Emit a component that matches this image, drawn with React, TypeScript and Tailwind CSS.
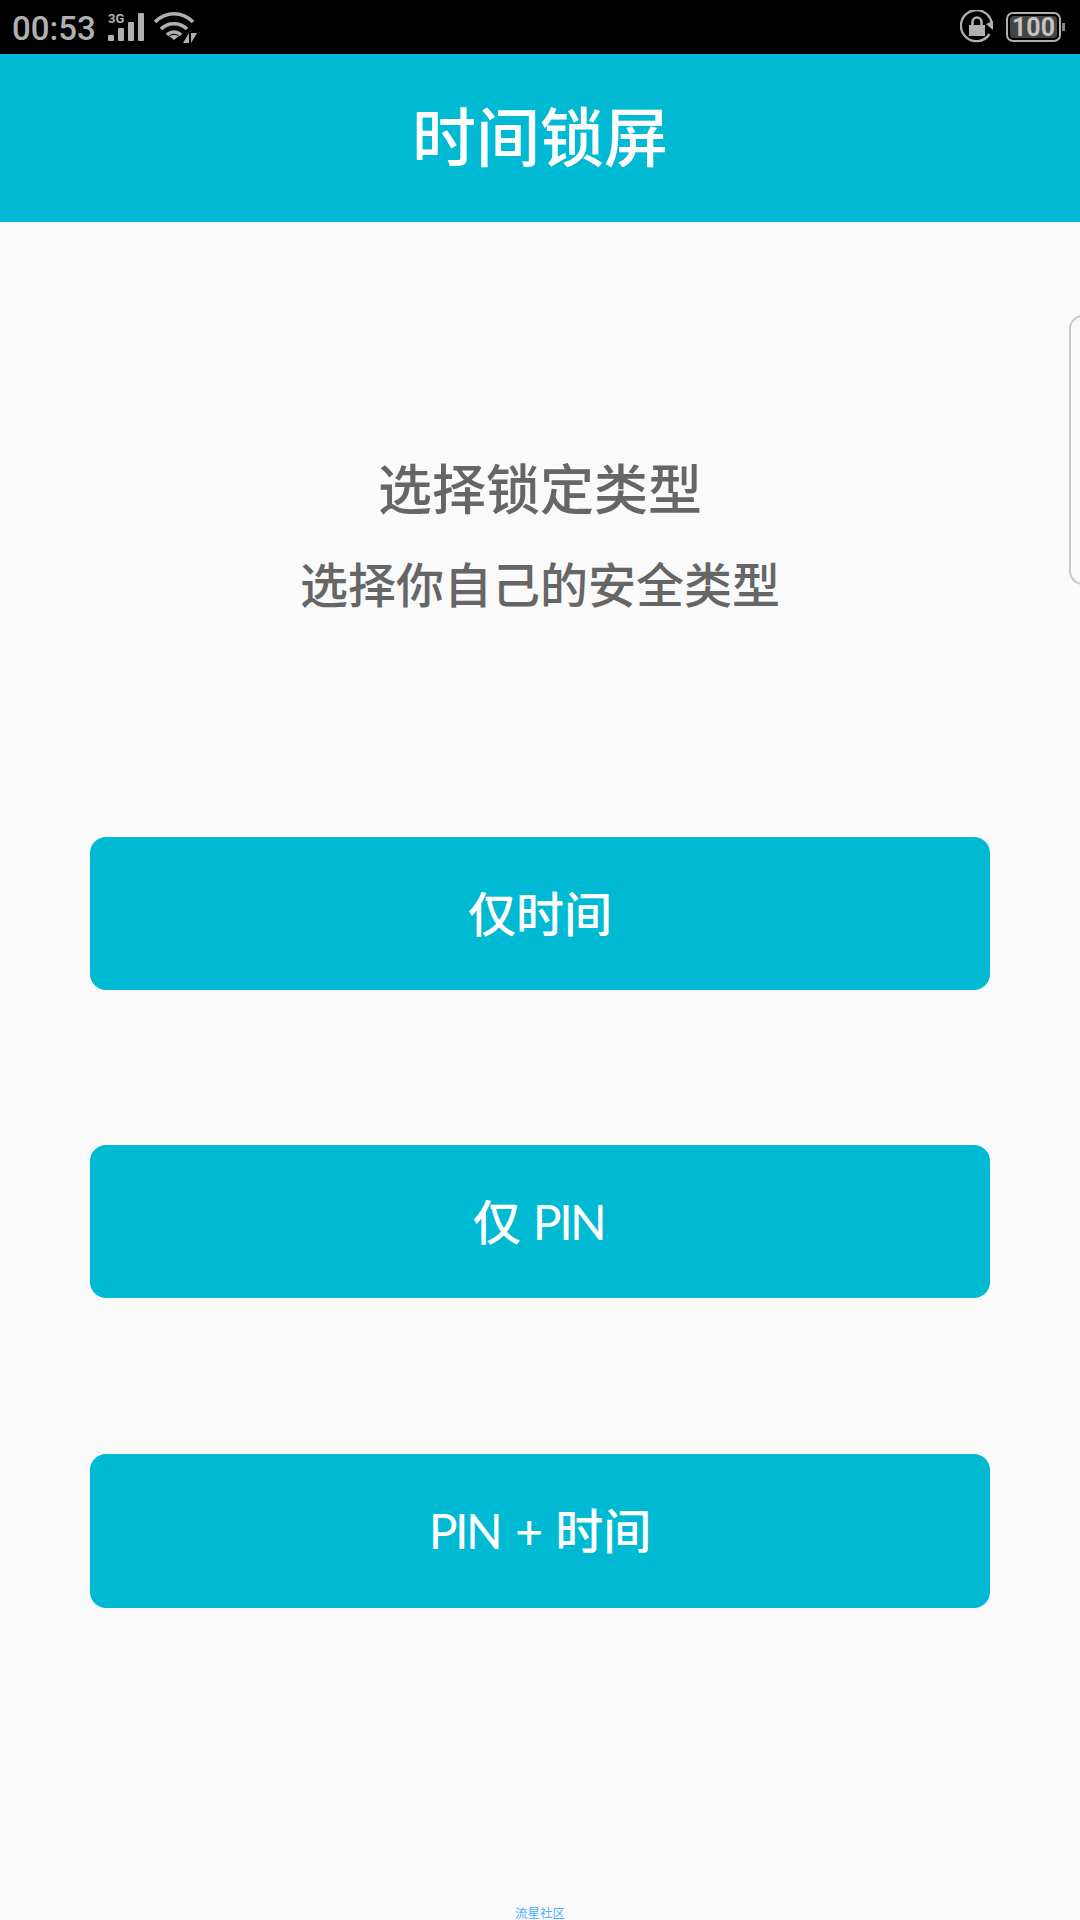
const cjk = '[font-family:Lato,"Noto_Sans_CJK_SC",sans-serif]'

const Pin = () => <span className="font-normal tracking-[-2.5px] mr-[3px]">PIN</span>

const options = [
  { id: 'time', label: <>仅时间</> },
  { id: 'pin', label: <>仅 <Pin /></> },
  { id: 'both', label: <><Pin /> + 时间</> },
]

function StatusBar() {
  return (
    <div className="h-[54px] bg-black flex items-center text-[#b0b0b0] [font-family:Roboto,sans-serif]">
      <span className="ml-[12px] w-[84px] text-[33px] font-medium leading-none mt-[2px]">00:53</span>
      <div className="relative ml-[12px] w-[36px] h-[54px]">
        <span className="absolute left-0 top-[12px] text-[13px] font-bold leading-none">3G</span>
        <svg width="36" height="54" viewBox="0 0 36 54" className="absolute inset-0" fill="currentColor">
          <rect x="0" y="35" width="6" height="6" rx="1" />
          <rect x="10" y="28" width="6" height="13" rx="1" />
          <rect x="20" y="22" width="6" height="19" rx="1" />
          <rect x="30" y="13" width="6" height="28" rx="1" />
        </svg>
      </div>
      <svg width="43" height="54" viewBox="0 0 43 54" className="ml-[10px]" fill="none" stroke="currentColor" strokeWidth="3.6">
        <path d="M1 22 C 12 11, 28 11, 39 22" />
        <path d="M7 29 C 14 22, 26 22, 33 29" />
        <path d="M13 35 C 17 31, 23 31, 27 35" />
        <path d="M20 40 L15 36 C 18 34.5, 22 34.5, 25 36 Z" fill="currentColor" stroke="none" />
        <path d="M35 33 L35 43 L29 43 Z M37 33 L37 43 L43 33 Z" fill="currentColor" stroke="none" />
      </svg>
      <div className="ml-auto flex items-center mr-[15px]">
        <svg width="34" height="34" viewBox="0 0 34 34" fill="none" stroke="currentColor" strokeWidth="2.4">
          <path d="M29.5 24 A15.5 15.5 0 1 1 31.5 12" />
          <path d="M33 20 L26 14 L33 11 Z" fill="currentColor" stroke="none" />
          <rect x="9" y="15" width="16" height="11" fill="currentColor" stroke="none" />
          <path d="M12.5 15 V12 A4.5 4.5 0 0 1 21.5 12 V15" strokeWidth="2.6" />
        </svg>
        <div className="ml-[12px] w-[55px] h-[30px] rounded-[7px] border-2 border-[#b0b0b0] p-[2px]">
          <div className="h-full rounded-[4px] bg-[#444] flex items-center justify-center text-[25px] font-bold leading-none text-[#c4c4c4]">100</div>
        </div>
        <div className="ml-[1px] w-[3px] h-[8px] bg-[#888]" />
      </div>
    </div>
  )
}

export default function App() {
  return (
    <div className={`relative w-[1080px] h-[1920px] overflow-hidden bg-[#fafafa] flex flex-col ${cjk}`}>
      <StatusBar />
      <header className="h-[168px] bg-[#00bad3] flex items-center justify-center text-white text-[64px] leading-none font-medium">
        <span className="-mt-[3px]">时间锁屏</span>
      </header>

      <div className="mt-[236px] text-center text-[#666666] font-medium">
        <h1 className="text-[54px] leading-[64px]">选择锁定类型</h1>
        <p className="mt-[31px] text-[48px] leading-[64px]">选择你自己的安全类型</p>
      </div>

      <div className="mt-[220px] px-[90px] flex flex-col gap-[155px]">
        {options.map((o) => (
          <button key={o.id} className="h-[153px] last:h-[154px] last:mt-[1px] rounded-[16px] bg-[#00bad3] text-white text-[48px] leading-none font-medium">
            {o.label}
          </button>
        ))}
      </div>

      <div className="absolute bottom-[-1px] left-0 right-0 text-center text-[12.5px] leading-[14px] text-[#4daeff]">流星社区</div>
      {/* floating side handle */}
      <div className="absolute right-[-10px] top-[315px] w-[21px] h-[270px] rounded-l-[14px] border-2 border-[#c8c8c8]" />
    </div>
  )
}
